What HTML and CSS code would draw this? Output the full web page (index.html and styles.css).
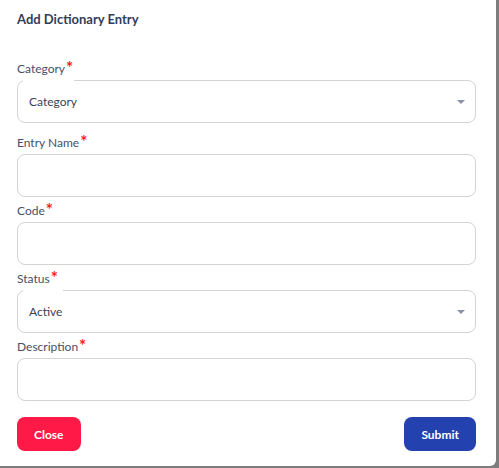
FILE: index.html
```html
<!DOCTYPE html>
<html lang="en">
<head>
<meta charset="utf-8">
<title>Add Dictionary Entry</title>
<link rel="stylesheet" href="styles.css">
</head>
<body>
<div class="modal">
  <h2 class="title">Add Dictionary Entry</h2>

  <div class="field field-first">
    <label class="label">Category<span class="req">*</span></label>
    <div class="box select">
      <span class="notch notch-category"></span>
      <span class="value">Category</span>
      <span class="arrow"></span>
    </div>
  </div>

  <div class="field field-after-select">
    <label class="label">Entry Name<span class="req">*</span></label>
    <div class="box"></div>
  </div>

  <div class="field">
    <label class="label">Code<span class="req">*</span></label>
    <div class="box"></div>
  </div>

  <div class="field">
    <label class="label">Status<span class="req">*</span></label>
    <div class="box select">
      <span class="notch notch-status"></span>
      <span class="value">Active</span>
      <span class="arrow"></span>
    </div>
  </div>

  <div class="field">
    <label class="label">Description<span class="req">*</span></label>
    <div class="box"></div>
  </div>

  <div class="actions">
    <button class="btn btn-close">Close</button>
    <button class="btn btn-submit">Submit</button>
  </div>
</div>
</body>
</html>
```

FILE: styles.css
```css
* { box-sizing: border-box; }

html, body {
  margin: 0;
  padding: 0;
}

body {
  background: #7d7d7d;
  font-family: Lato, "Noto Sans", sans-serif;
  width: 499px;
  height: 468px;
  overflow: hidden;
}

.modal {
  width: 496px;
  height: 466px;
  background: #ffffff;
  border-bottom-right-radius: 6px;
  padding: 11px 20px 0 17px;
  display: flex;
  flex-direction: column;
}

.title {
  margin: 0;
  font-size: 13px;
  line-height: 16px;
  font-weight: 700;
  color: #333d58;
}

.field {
  display: flex;
  flex-direction: column;
  margin-top: 7px;
}

.field-first { margin-top: 35px; }
.field-after-select { margin-top: 13px; }

.label {
  display: block;
  height: 14px;
  font-size: 12px;
  line-height: 14px;
  color: #47506a;
  margin-bottom: 4px;
  white-space: nowrap;
}

.req {
  color: #ff1a1a;
  font-size: 17px;
  font-weight: 700;
  line-height: 0;
  vertical-align: -1px;
  margin-left: 1px;
}

.box {
  position: relative;
  height: 43px;
  border: 1px solid #d3d3d3;
  border-radius: 8px;
  display: flex;
  align-items: center;
  padding: 0 10px 0 11px;
}

.notch {
  position: absolute;
  top: -1px;
  left: 5px;
  height: 2px;
  background: #ffffff;
}

.notch-category { width: 51px; }
.notch-status { width: 40px; }

.value {
  flex: 1;
  font-size: 12px;
  color: #3b4358;
}

.arrow {
  width: 0;
  height: 0;
  border-left: 4px solid transparent;
  border-right: 4px solid transparent;
  border-top: 4px solid #8a92a4;
}

.actions {
  display: flex;
  justify-content: space-between;
  margin-top: 16px;
}

.btn {
  height: 34px;
  border: none;
  border-radius: 8px;
  padding: 0 17px;
  font-family: Lato, "Noto Sans", sans-serif;
  font-size: 12px;
  font-weight: 700;
  color: #ffffff;
}

.btn-close { background: #fe1946; }
.btn-submit { background: #2342af; }
```
